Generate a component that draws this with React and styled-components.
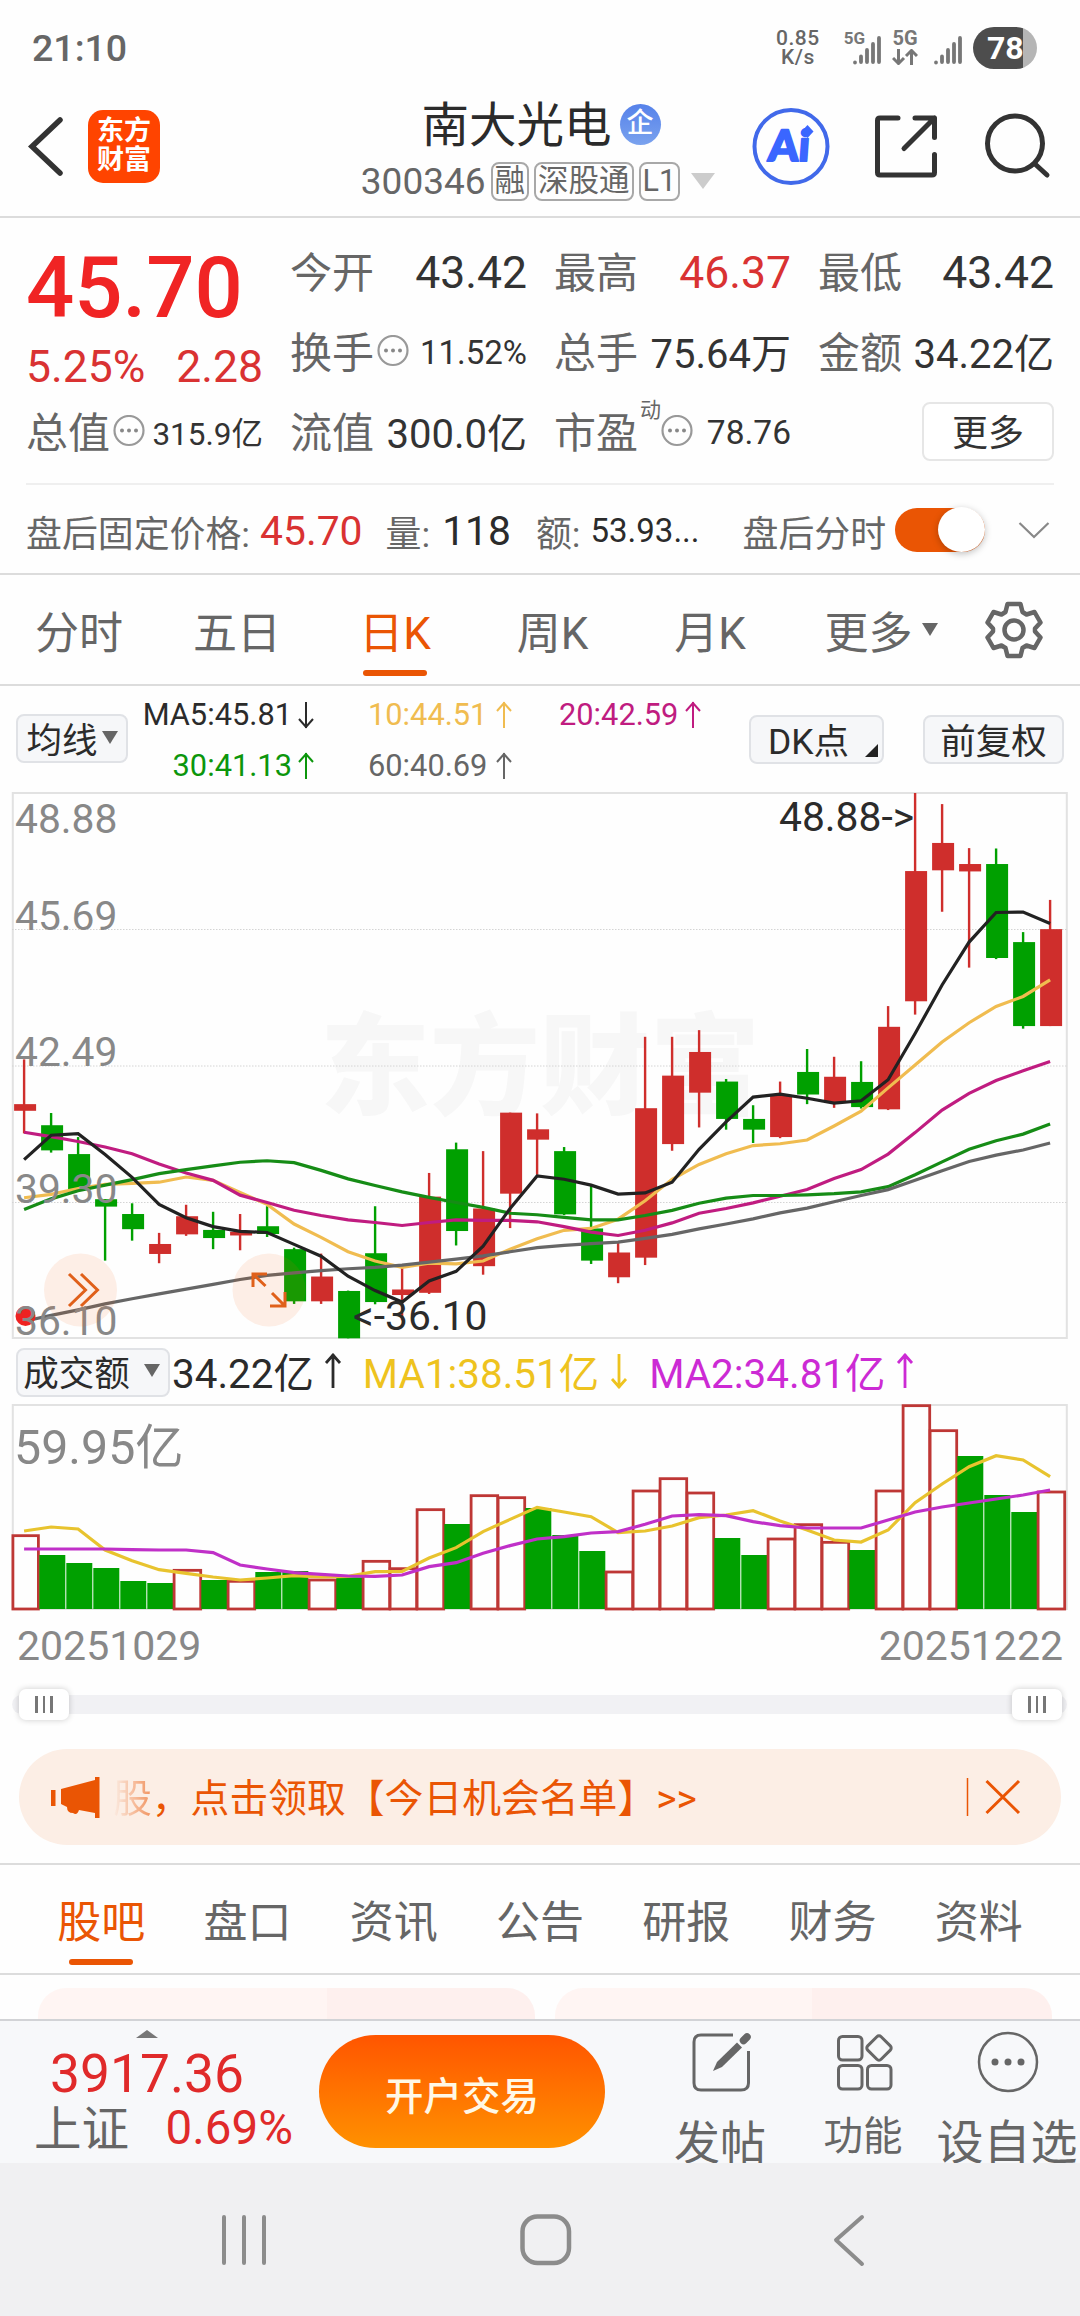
import React from 'react';
import styled, { createGlobalStyle } from 'styled-components';

const GlobalStyle = createGlobalStyle`
  * {
    box-sizing: border-box;
  }
  body {
    margin: 0;
    background: #fefefe;
    font-family: Roboto, 'Noto Sans CJK SC', sans-serif;
    color: #666;
    overflow: hidden;
  }
  svg {
    display: block;
    flex: none;
  }
`;

const red = '#d93232';
const orange = '#ea5504';
const dark = '#2b2b2b';

const Screen = styled.div`
  width: 1080px;
  height: 2316px;
  display: flex;
  flex-direction: column;
  overflow: hidden;
`;

/* ---------- status bar ---------- */

const StatusBar = styled.div`
  height: 75px;
  padding: 22px 43px 0 32px;
  display: flex;
  align-items: flex-start;
  justify-content: space-between;
`;

const Clock = styled.span`
  font-size: 37.5px;
  line-height: 53px;
  font-weight: 500;
  color: #666;
`;

const StatusRight = styled.div`
  display: flex;
  align-items: center;
  height: 52px;
`;

const NetSpeed = styled.div`
  display: flex;
  flex-direction: column;
  align-items: center;
  font-size: 21px;
  line-height: 19.5px;
  font-weight: 500;
  letter-spacing: 0.5px;
  margin-right: 24px;
`;

const Battery = styled.div`
  width: 64px;
  height: 42px;
  margin-left: 10px;
  border-radius: 21px;
  background: linear-gradient(90deg, #4d4d4d 50px, #b5b5b5 50px);
  color: #fff;
  font-size: 32px;
  line-height: 43px;
  font-weight: 700;
  padding-left: 14px;
`;

/* ---------- header ---------- */

const Header = styled.header`
  height: 143px;
  border-bottom: 2px solid #dcdcdc;
  display: flex;
  align-items: flex-start;
  padding: 0 29px 0 27px;
`;

const AppLogo = styled.div`
  width: 72px;
  height: 73px;
  margin: 35px 0 0 23px;
  border-radius: 15px;
  background: #ff4400;
  color: #fff;
  font-size: 27px;
  line-height: 29px;
  font-weight: 700;
  text-align: center;
  padding-top: 7px;
`;

const TitleBox = styled.div`
  width: 355px;
  margin: 16px 0 0 201px;
  display: flex;
  flex-direction: column;
  align-items: center;
`;

const StockName = styled.div`
  height: 60px;
  display: flex;
  align-items: center;
  gap: 8px;
  margin-left: 5px;
  font-size: 47.5px;
  color: ${dark};
`;

const CompanyBadge = styled.span`
  width: 41px;
  height: 41px;
  margin-top: 6px;
  border-radius: 50%;
  background: linear-gradient(#5682ea, #7aa2ee);
  color: #fff;
  font-size: 27px;
  line-height: 39px;
  font-weight: 500;
  text-align: center;
`;

const CodeRow = styled.div`
  display: flex;
  align-items: center;
  height: 48px;
  margin: 6px 0 0 -1px;
  gap: 5px;
  font-size: 37px;
  color: #666;
  white-space: nowrap;
`;

const Tag = styled.span`
  height: 39px;
  padding: 0 2px;
  border: 2px solid #a8a8a8;
  border-radius: 8px;
  font-size: 30.5px;
  line-height: 34px;
  flex: none;
`;

const HeaderIcons = styled.div`
  display: flex;
  margin: 33px 0 0 auto;
`;

/* ---------- quote ---------- */

const Quote = styled.section`
  height: 267px;
  margin: 0 26px;
  border-bottom: 2px solid #efefef;
  display: grid;
  column-gap: 27px;
  grid-template-columns: 237px 237px 237px 236px;
  grid-template-rows: 80px 80px 80px;
  padding-top: 14px;
`;

const PriceCell = styled.div`
  grid-row: span 2;
`;

const Price = styled.div`
  height: 111px;
  font-size: 85px;
  line-height: 112px;
  font-weight: 500;
  color: #f02424;
`;

const Change = styled.div`
  display: flex;
  justify-content: space-between;
  height: 48px;
  line-height: 49px;
  font-size: 44.5px;
  color: ${red};
`;

const Cell = styled.div`
  display: flex;
  align-items: center;
`;

const Label = styled.span`
  font-size: 42px;
  white-space: nowrap;
  margin: -5px 2px 0 0;
`;

const Value = styled.span`
  margin-left: auto;
  margin-top: ${(p) => p.$top || 0}px;
  font-size: ${(p) => p.$size || 44.5}px;
  color: ${(p) => p.$color || '#333'};
  white-space: nowrap;
`;

const Sup = styled.sup`
  align-self: flex-start;
  font-size: 21px;
  line-height: 26px;
  margin: 5px -1px 0 0;
`;

const MoreButton = styled.button`
  margin: -2px 0 0 auto;
  width: 132px;
  height: 59px;
  padding: 0 0 4px;
  border: 2px solid #e6e6e6;
  border-radius: 8px;
  background: #fff;
  font: inherit;
  font-size: 36px;
  color: #333;
`;

const AfterHours = styled.section`
  height: 90px;
  padding: 3px 30px 0 26px;
  border-bottom: 2px solid #dcdcdc;
  display: flex;
  align-items: center;
  font-size: 35.9px;
  white-space: nowrap;
`;

const AfterValue = styled.span`
  font-size: ${(p) => p.$size || 40.8}px;
  color: ${(p) => p.$color || dark};
  margin: 0 ${(p) => p.$gap}px 0 ${(p) => p.$before || 10}px;
`;

const Toggle = styled.span`
  width: 90px;
  height: 44px;
  margin: -2px 0 0 9px;
  border-radius: 22px;
  background: ${orange};
  display: flex;
  justify-content: flex-end;
  align-items: center;

  &::after {
    content: '';
    width: 47px;
    height: 45px;
    border-radius: 50%;
    background: #fff;
    box-shadow: 0 2px 7px rgba(0, 0, 0, 0.25);
  }
`;

/* ---------- tabs ---------- */

const Tabs = styled.nav`
  height: 111px;
  border-bottom: 2px solid #dcdcdc;
  display: flex;
  padding: 0 ${(p) => p.$inset || 0}px;
`;

const Tab = styled.div`
  width: ${(p) => p.$width}px;
  display: flex;
  align-items: center;
  justify-content: center;
  position: relative;
  font-size: 44px;
  color: ${(p) => (p.$active ? orange : '#666')};

  &::after {
    content: '';
    display: ${(p) => (p.$active ? 'block' : 'none')};
    position: absolute;
    left: calc(50% - 32px);
    bottom: 8px;
    width: 64px;
    height: 6px;
    border-radius: 3px;
    background: ${orange};
  }
`;

const Caret = styled.i`
  border: ${(p) => p.$w || 8}px solid transparent;
  border-top: ${(p) => p.$h || 13}px solid ${(p) => p.$color || '#666'};
  border-bottom: 0;
  margin-left: ${(p) => p.$gap || 0}px;
`;

/* ---------- indicators ---------- */

const MaBar = styled.div`
  height: 107px;
  display: flex;
  align-items: flex-start;
  padding: 0 16px;
`;

const Chip = styled.div`
  width: ${(p) => p.$width}px;
  height: 49px;
  margin: ${(p) => p.$margin || 0};
  padding: 0 ${(p) => p.$padRight || 0}px 3px 0;
  border: 2px solid #e0e2e6;
  border-radius: 8px;
  background: #f6f7f9;
  display: flex;
  align-items: center;
  justify-content: center;
  position: relative;
  flex: none;
  font-size: 35.5px;
  color: ${dark};
  white-space: nowrap;
`;

const Corner = styled.i`
  position: absolute;
  right: 4px;
  bottom: 5px;
  border-left: 13px solid transparent;
  border-bottom: 13px solid #222;
`;

const MaGrid = styled.div`
  display: grid;
  grid-template-columns: 175px 140px 166px;
  grid-template-rows: 51px 51px;
  column-gap: 51px;
  margin-left: 14px;
  padding-top: 3px;
  flex: none;
`;

const MaText = styled.div`
  display: flex;
  align-items: center;
  justify-content: ${(p) => (p.$left ? 'flex-start' : 'flex-end')};
  font-size: 30.8px;
  color: ${(p) => p.$color};
`;

const TurnoverBar = styled.div`
  height: 66px;
  display: flex;
  align-items: center;
  padding-left: 16px;
  font-size: 40.4px;
`;

const Turnover = styled.span`
  display: flex;
  align-items: center;
  color: ${(p) => p.$color};
  margin: -3px ${(p) => p.$gap || 0}px 0 2px;

  svg {
    margin-top: 1px;
  }
`;

const ChartSvg = styled.svg`
  margin-left: 12px;
  overflow: visible;
  font-size: 40.8px;
`;

const Dates = styled.div`
  height: 81px;
  padding: 11px 17px 0 17px;
  display: flex;
  justify-content: space-between;
  font-size: 41px;
  line-height: 51px;
  color: #888;
`;

const Range = styled.div`
  height: 19px;
  margin: 4px 13px 0 12px;
  border-radius: 10px;
  background: #f1f1f4;
  display: flex;
  align-items: center;
  justify-content: space-between;
  padding: 0 5px 0 7px;
`;

const Handle = styled.div`
  width: 50px;
  height: 31px;
  border-radius: 7px;
  background: #fff;
  box-shadow: 0 0 6px rgba(0, 0, 0, 0.2);
  display: flex;
  align-items: center;
  justify-content: center;
  gap: 5px;

  i {
    width: 2.5px;
    height: 17px;
    background: #777;
  }
`;

/* ---------- notice ---------- */

const Notice = styled.div`
  height: 96px;
  margin: 35px 19px 18px;
  border-radius: 48px;
  background: #fceee5;
  display: flex;
  align-items: center;
  padding: 0 40px 0 31px;
  font-size: 38.8px;
  color: ${orange};
  white-space: nowrap;
`;

const NoticeText = styled.span`
  margin: -4px 0 0 13px;
`;

const Faded = styled.span`
  background: linear-gradient(90deg, rgba(234, 85, 4, 0), rgba(234, 85, 4, 0.6));
  background-clip: text;
  color: transparent;
`;

const Cards = styled.div`
  height: 44px;
  padding: 13px 28px 0 38px;
  display: flex;
  justify-content: space-between;
  overflow: hidden;
`;

const Card = styled.div`
  width: 497px;
  height: 80px;
  border-radius: 28px;
  background: linear-gradient(90deg, #fff5f3 ${(p) => p.$split}px, #fef0ee ${(p) => p.$split}px);
`;

/* ---------- bottom ---------- */

const BottomBar = styled.footer`
  height: 144px;
  border-top: 2px solid #d2d3d6;
  background: #f7f8fa;
  display: flex;
  align-items: flex-start;
  flex: none;
`;

const IndexBox = styled.div`
  width: 293px;
  padding-left: 34px;
  display: flex;
  flex-direction: column;
  align-items: center;
  color: #e02a2a;

  svg {
    margin: 9px 34px 0 0;
  }
`;

const IndexValue = styled.div`
  font-size: 53.3px;
  line-height: 60px;
  margin: 6px 33px 0 0;
`;

const IndexRow = styled.div`
  display: flex;
  align-items: center;
  justify-content: space-between;
  width: 259px;
  height: 48px;
  font-size: 47.5px;
  white-space: nowrap;

  b {
    font-weight: 400;
    margin: -6px 0 0 0;
    color: #666;
  }
`;

const TradeButton = styled.button`
  width: 286px;
  height: 113px;
  margin: 14px 0 0 26px;
  padding: 3px 0 0;
  border: 0;
  border-radius: 57px;
  background: linear-gradient(#ff5500, #ff9100);
  font: inherit;
  font-size: 38.5px;
  font-weight: 500;
  color: #fff8e6;
`;

const Action = styled.div`
  width: ${(p) => p.$width}px;
  margin-left: ${(p) => p.$gap}px;
  padding-top: 9px;
  display: flex;
  flex-direction: column;
  align-items: center;
  flex: none;
  font-size: ${(p) => p.$size}px;
  line-height: 60px;
  white-space: nowrap;

  span {
    margin: ${(p) => p.$drop}px 2px 0 0;
  }
`;

const NavBar = styled.div`
  height: 153px;
  flex: none;
  background: #f0f0f2;
  display: flex;
  align-items: flex-start;
  padding: 50px 0 0 218px;
`;

/* ---------- chart data: [up, high, body top, body bottom, low] on the 35..1508 axis ---------- */

const candles = [
  [1, 755, 876, 894, 955], [0, 900, 933, 1001, 1007], [0, 965, 1011, 1107, 1107],
  [0, 1133, 1133, 1153, 1299], [0, 1144, 1173, 1214, 1245], [1, 1224, 1254, 1281, 1306],
  [1, 1148, 1179, 1228, 1232], [0, 1167, 1216, 1238, 1268], [1, 1173, 1221, 1231, 1271],
  [0, 1152, 1206, 1227, 1235], [0, 1264, 1268, 1409, 1416], [1, 1280, 1342, 1409, 1416],
  [0, 1380, 1381, 1509, 1509], [0, 1152, 1279, 1411, 1417], [1, 1308, 1377, 1392, 1460],
  [1, 1062, 1126, 1386, 1389], [0, 980, 998, 1219, 1258], [1, 1003, 1158, 1314, 1337],
  [1, 899, 899, 1118, 1211], [1, 901, 944, 972, 1067], [0, 992, 1003, 1174, 1176],
  [0, 1097, 1212, 1299, 1308], [1, 1246, 1277, 1344, 1360], [1, 694, 887, 1291, 1311],
  [1, 694, 799, 984, 1002], [1, 676, 735, 845, 939], [0, 808, 815, 916, 945],
  [0, 879, 916, 945, 981], [1, 815, 852, 965, 968], [0, 727, 789, 850, 876],
  [1, 748, 802, 873, 886], [0, 760, 816, 884, 888], [1, 611, 667, 890, 892],
  [1, 35, 246, 598, 634], [1, 65, 170, 244, 356], [1, 184, 227, 247, 507],
  [0, 185, 227, 481, 484], [0, 411, 438, 665, 672], [1, 324, 403, 665, 665],
];

const priceLines = [
  { color: '#f0bc50', points: [1129, 1120, 1104, 1093, 1090, 1087, 1073, 1082, 1115, 1147, 1200, 1236, 1275, 1300, 1317, 1306, 1308, 1300, 1268, 1240, 1217, 1212, 1187, 1137, 1079, 1039, 1010, 988, 983, 973, 935, 895, 832, 770, 708, 656, 612, 585, 540] },
  { color: '#c01c80', points: [952, 964, 977, 992, 1010, 1038, 1062, 1082, 1122, 1142, 1163, 1177, 1189, 1196, 1204, 1196, 1189, 1190, 1190, 1194, 1207, 1222, 1231, 1217, 1197, 1171, 1158, 1143, 1125, 1107, 1077, 1053, 1011, 953, 892, 847, 812, 786, 761] },
  { color: '#168c16', points: [1161, 1132, 1110, 1095, 1080, 1064, 1053, 1043, 1033, 1029, 1034, 1055, 1078, 1096, 1113, 1128, 1142, 1155, 1171, 1175, 1182, 1189, 1189, 1177, 1163, 1144, 1130, 1123, 1123, 1121, 1118, 1113, 1099, 1067, 1032, 998, 975, 957, 930] },
  { color: '#666', points: [1463, 1447, 1432, 1416, 1402, 1389, 1376, 1363, 1350, 1339, 1332, 1326, 1321, 1317, 1311, 1303, 1295, 1286, 1275, 1264, 1258, 1253, 1249, 1239, 1228, 1213, 1200, 1186, 1170, 1157, 1140, 1123, 1107, 1082, 1056, 1031, 1014, 1000, 981] },
  { color: '#222', points: [1026, 960, 956, 1012, 1074, 1147, 1183, 1207, 1220, 1223, 1255, 1287, 1341, 1380, 1411, 1354, 1328, 1260, 1158, 1070, 1079, 1095, 1119, 1116, 1087, 998, 924, 857, 849, 860, 873, 867, 810, 685, 554, 438, 358, 357, 388] },
];

const volumes = [
  [1, 587], [0, 645], [0, 669], [0, 684], [0, 723], [0, 729], [1, 691], [0, 720], [1, 724], [0, 696],
  [0, 693], [1, 720], [0, 712], [1, 664], [1, 686], [1, 509], [0, 552], [1, 467], [1, 473], [0, 504],
  [0, 585], [0, 633], [1, 696], [1, 453], [1, 416], [1, 459], [0, 594], [0, 645], [1, 597], [1, 554],
  [1, 607], [0, 630], [1, 453], [1, 197], [1, 272], [0, 348], [0, 465], [0, 516], [1, 456],
];

const volumeLines = [
  { color: '#e8c32e', points: [573, 561, 567, 630, 662, 689, 700, 711, 720, 714, 707, 711, 709, 695, 694, 654, 623, 575, 538, 502, 516, 530, 578, 573, 558, 533, 525, 512, 543, 570, 600, 606, 570, 488, 432, 380, 347, 360, 410] },
  { color: '#c030c8', points: [627, 627, 627, 627, 630, 630, 630, 638, 675, 687, 698, 703, 708, 709, 705, 680, 668, 640, 617, 597, 590, 579, 575, 553, 528, 524, 527, 545, 557, 564, 564, 564, 540, 516, 501, 489, 477, 465, 450] },
];
// the slow average stays flat for its first days
volumeLines[1].points.splice(4, 3, 629, 630, 630);

const axis = [
  ['48.88', 40],
  ['45.69', 137],
  ['42.49', 273],
  ['39.30', 409.5],
  ['36.10', 541.5],
];

const centerX = (i) => 12.1 + i * 27;
const priceY = (v) => (v - 35) / 2.703;
const volumeY = (v) => (v - 195) / 3;
const toPoints = (list, scale) => list.map((v, i) => `${centerX(i)},${scale(v)}`).join(' ');

const PriceChart = () => (
  <ChartSvg width="1056" height="546" viewBox="0 0 1056 546">
    <text x="308" y="313" fontSize="110" fontWeight="900" fill="#f7f7f7">
      东方财富
    </text>
    <rect x="0.8" y="0" width="1054" height="545" fill="none" stroke="#e2e2e2" strokeWidth="2" />
    {[136.5, 273, 409.5].map((y) => (
      <line key={y} x1="0" x2="1055" y1={y} y2={y} stroke="#d4d4d4" strokeDasharray="1.5 1.5" />
    ))}
    {candles.map(([up, high, top, bottom, low], i) => (
      <g key={i} fill={up ? '#cf2e2c' : '#00a000'}>
        <rect x={centerX(i) - 1.2} y={priceY(high)} width="2.4" height={priceY(low) - priceY(high)} />
        <rect x={centerX(i) - 10} y={priceY(top)} width="22" height={priceY(bottom) - priceY(top)} />
      </g>
    ))}
    {priceLines.map((line) => (
      <polyline
        key={line.color}
        points={toPoints(line.points, priceY)}
        fill="none"
        stroke={line.color}
        strokeWidth="3.2"
      />
    ))}
    <circle cx="13.5" cy="523" r="10" fill="#ee2222" />
    {axis.map(([text, y]) => (
      <text key={text} x="3" y={y} fill="#888">
        {text}
      </text>
    ))}
    <text x="767" y="38" fill={dark}>{'48.88->'}</text>
    <text x="341" y="537" fill={dark}>{'<-36.10'}</text>
    <circle cx="68.5" cy="497" r="36.5" fill="rgba(250,100,20,.1)" />
    <circle cx="257" cy="497" r="36.5" fill="rgba(250,100,20,.1)" />
    <g fill="none" stroke="#e0601a" strokeWidth="3">
      <path d="M57 481 L73.500 497 L57 513 M69 481 L85.500 497 L69 513" />
      <path d="M241 494 V481 H255 M241 481 L253.500 493 M273 499 V513 H258 M273 513 L260 500" />
    </g>
  </ChartSvg>
);

const VolumeChart = () => (
  <ChartSvg width="1056" height="205" viewBox="0 0 1056 205">
    <rect x="0.8" y="0" width="1054" height="204" fill="none" stroke="#e2e2e2" strokeWidth="2" />
    <text x="2" y="59" fontSize="48.3" fill="#888">
      59.95亿
    </text>
    {volumes.map(([up, top], i) =>
      up ? (
        <rect
          key={i}
          x={centerX(i) - 12 + (i ? 0 : 0.8)}
          y={volumeY(top)}
          width={i ? 26.6 : 25.5}
          height={204 - volumeY(top)}
          fill="#fefefe"
          stroke="#be3735"
          strokeWidth="2.8"
        />
      ) : (
        <rect key={i} x={centerX(i) - 11.8} y={volumeY(top)} width="26" height={204 - volumeY(top)} fill="#00a000" />
      ),
    )}
    {volumeLines.map((line) => (
      <polyline
        key={line.color}
        points={toPoints(line.points, volumeY)}
        fill="none"
        stroke={line.color}
        strokeWidth="3.2"
      />
    ))}
  </ChartSvg>
);

/* ---------- icons ---------- */

const Signal = () => (
  <svg width="30" height="30" viewBox="0 0 30 30" stroke="#777" strokeWidth="3.800" strokeLinecap="round">
    <path d="M3 27.500 V27.600 M9 21.500 V27 M15 15 V27 M21 9 V27 M27 3 V27" />
  </svg>
);

const Dots = () => (
  <svg width="34" height="34" viewBox="0 0 34 34">
    <circle cx="17" cy="15.500" r="14.500" fill="none" stroke="#999" strokeWidth="2.2" />
    <g fill="#888">
      <circle cx="10" cy="15.500" r="2" />
      <circle cx="17" cy="15.500" r="2" />
      <circle cx="24" cy="15.500" r="2" />
    </g>
  </svg>
);

const SignalGroup = styled.div`
  display: flex;
  align-items: ${(p) => (p.$stack ? 'center' : 'flex-start')};
  flex-direction: ${(p) => (p.$stack ? 'column' : 'row')};
  height: 36px;
  margin: ${(p) => (p.$stack ? '0 15px 0 10px' : 0)};
  font-size: ${(p) => (p.$stack ? 20 : 17)}px;
  line-height: 16px;
  font-weight: 700;
  color: #777;

  svg {
    margin-top: ${(p) => (p.$stack ? 3 : 5)}px;
    margin-left: ${(p) => (p.$stack ? 0 : p.$offset)}px;
  }
`;

const Arrow = ({ up, size = 22, height = 28, gap = 3 }) => (
  <svg width={size + gap} height={height} viewBox={`${-gap} 0 ${size + gap} ${height}`}>
    <path
      d={`M${size / 2} 1 V${height - 1} M${size / 2 - 7} ${up ? 10 : height - 10} L${size / 2} ${
        up ? 2 : height - 2
      } L${size / 2 + 7} ${up ? 10 : height - 10}`}
      fill="none"
      stroke="currentColor"
      strokeWidth={height > 30 ? 2.8 : 2}
    />
  </svg>
);

const BarsHandle = () => (
  <Handle>
    <i />
    <i />
    <i />
  </Handle>
);

const PushedSvg = styled.svg`
  margin-left: auto;
`;

const SectionTabs = styled(Tabs)`
  height: 112px;
  border-top: 2px solid #dcdcdc;
`;

const App = () => {
  const sections = ['股吧', '盘口', '资讯', '公告', '研报', '财务', '资料'];

  return (
    <Screen>
      <GlobalStyle />
      <StatusBar>
        <Clock>21:10</Clock>
        <StatusRight>
          <NetSpeed>
            <span>0.85</span>
            <span>K/s</span>
          </NetSpeed>
          <SignalGroup $offset={-13}>
            5G
            <Signal />
          </SignalGroup>
          <SignalGroup $stack>
            5G
            <svg width="26" height="16" viewBox="0 0 26 16" fill="none" stroke="#777" strokeWidth="3">
              <path d="M6.500 0 V14 M1 9 L6.500 14.500 L12 9 M19.500 16 V2 M14 7 L19.500 1.500 L25 7" />
            </svg>
          </SignalGroup>
          <SignalGroup $offset={0}>
            <Signal />
          </SignalGroup>
          <Battery>78</Battery>
        </StatusRight>
      </StatusBar>

      <Header>
        <svg width="38" height="143" viewBox="27 75 38 143">
          <path d="M60 120 L32 146.500 L60 173" fill="none" stroke="#333" strokeWidth="5.500" strokeLinecap="round" />
        </svg>
        <AppLogo>
          东方
          <br />
          财富
        </AppLogo>
        <TitleBox>
          <StockName>
            南大光电
            <CompanyBadge>企</CompanyBadge>
          </StockName>
          <CodeRow>
            300346
            <Tag>融</Tag>
            <Tag>深股通</Tag>
            <Tag>L1</Tag>
            <Caret $w={12} $h={16} $gap={6} $color="#ccc" />
          </CodeRow>
        </TitleBox>
        <HeaderIcons>
          <svg width="300" height="78" viewBox="751 107 300 78" fill="none" strokeLinecap="round" strokeLinejoin="round">
            <circle cx="791" cy="145.500" r="36.500" stroke="#4169ea" strokeWidth="4" />
            <g transform="translate(767.5 159.5) skewX(-4)">
              <text
                fontFamily="Lato, sans-serif"
                fontSize="43"
                fontWeight="900"
                fill="#3a66ff"
                stroke="#3a66ff"
                strokeWidth="2"
              >
                Ai
              </text>
            </g>
            <path d="M807.500 124 L813.500 130.500 L807.500 137 L801.500 130.500 Z" fill="#3a66ff" />
            <g stroke="#333" strokeWidth="5">
              <path d="M898 117 H880 Q877.500 117 877.500 119.500 V171.500 Q877.500 174 880 174 H932 Q934.500 174 934.500 171.500 V153.500" />
              <path d="M915 117 H934.500 V136.500 M934.500 117 L904 147.500" />
              <circle cx="1015" cy="142.500" r="27.500" />
              <path d="M1035 163 L1047 174" />
            </g>
          </svg>
        </HeaderIcons>
      </Header>

      <Quote>
        <PriceCell>
          <Price>45.70</Price>
          <Change>
            <span>5.25%</span>
            <span>2.28</span>
          </Change>
        </PriceCell>
        <Cell>
          <Label>今开</Label>
          <Value $top={2}>43.42</Value>
        </Cell>
        <Cell>
          <Label>最高</Label>
          <Value $top={2} $color={red}>46.37</Value>
        </Cell>
        <Cell>
          <Label>最低</Label>
          <Value $top={2}>43.42</Value>
        </Cell>
        <Cell>
          <Label>换手</Label>
          <Dots />
          <Value $size={33}>11.52%</Value>
        </Cell>
        <Cell>
          <Label>总手</Label>
          <Value $size={40} $top={-3}>75.64万</Value>
        </Cell>
        <Cell>
          <Label>金额</Label>
          <Value $size={40} $top={-3}>34.22亿</Value>
        </Cell>
        <Cell>
          <Label>总值</Label>
          <Dots />
          <Value $size={31.5} $top={-3}>315.9亿</Value>
        </Cell>
        <Cell>
          <Label>流值</Label>
          <Value $size={40} $top={-3}>300.0亿</Value>
        </Cell>
        <Cell>
          <Label>市盈</Label>
          <Sup>动</Sup>
          <Dots />
          <Value $size={33.5}>78.76</Value>
        </Cell>
        <Cell>
          <MoreButton>更多</MoreButton>
        </Cell>
      </Quote>

      <AfterHours>
        盘后固定价格:
        <AfterValue $color={red} $gap={23}>45.70</AfterValue>
        量:
        <AfterValue $gap={25} $before={12}>118</AfterValue>
        额:
        <AfterValue $size={33} $gap={43}>53.93...</AfterValue>
        盘后分时
        <Toggle />
        <PushedSvg width="32" height="18" viewBox="0 0 32 18">
          <path d="M1.500 1 L16 15 L30.500 1" fill="none" stroke="#888" strokeWidth="2.200" />
        </PushedSvg>
      </AfterHours>

      <Tabs>
        <Tab $width={158}>分时</Tab>
        <Tab $width={158}>五日</Tab>
        <Tab $width={158} $active>日K</Tab>
        <Tab $width={157}>周K</Tab>
        <Tab $width={158}>月K</Tab>
        <Tab $width={184}>
          更多
          <Caret $gap={9} />
        </Tab>
        <Tab $width={82}>
          <svg width="60" height="60" viewBox="-30 -30 60 60" fill="none" stroke="#666" strokeWidth="4.500" strokeLinejoin="round">
            <path d="M-6.500 -26 H6.500 L8.500 -18 L12.500 -15.500 L20.500 -18 L26.500 -7.500 L21 -1.500 V1.500 L26.500 7.500 L20.500 18 L12.500 15.500 L8.500 18 L6.500 26 H-6.500 L-8.500 18 L-12.500 15.500 L-20.500 18 L-26.500 7.500 L-21 1.500 V-1.500 L-26.500 -7.500 L-20.500 -18 L-12.500 -15.500 L-8.500 -18 Z" />
            <circle r="9.500" />
          </svg>
        </Tab>
      </Tabs>

      <MaBar>
        <Chip $width={112} $margin="28px 0 0">
          均线
          <Caret $gap={4} />
        </Chip>
        <MaGrid>
          <MaText $color={dark}>MA5:45.81<Arrow /></MaText>
          <MaText $color="#f0bc50" $left>10:44.51<Arrow up gap={6} /></MaText>
          <MaText $color="#c01c80" $left>20:42.59<Arrow up gap={4} /></MaText>
          <MaText $color="#0c960c">30:41.13<Arrow up /></MaText>
          <MaText $color="#666" $left>60:40.69<Arrow up gap={6} /></MaText>
        </MaGrid>
        <Chip $width={135} $margin="29px 0 0 auto" $padRight={16}>
          DK点
          <Corner />
        </Chip>
        <Chip $width={141} $margin="29px 0 0 39px">前复权</Chip>
      </MaBar>

      <PriceChart />

      <TurnoverBar>
        <Chip $width={154} $padRight={3}>
          成交额
          <Caret $gap={14} />
        </Chip>
        <Turnover $color={dark} $gap={17}>34.22亿<Arrow up height={36} gap={8} /></Turnover>
        <Turnover $color="#eec31e" $gap={17}>MA1:38.51亿<Arrow height={36} gap={9} /></Turnover>
        <Turnover $color="#cc2ad4">MA2:34.81亿<Arrow up height={36} gap={9} /></Turnover>
      </TurnoverBar>

      <VolumeChart />

      <Dates>
        <span>20251029</span>
        <span>20251222</span>
      </Dates>

      <Range>
        <BarsHandle />
        <BarsHandle />
      </Range>

      <Notice>
        <svg width="50" height="42" viewBox="50 1775 50 42" fill={orange}>
          <path d="M51 1789 H55.500 V1805 H51 Z M61 1788 L95 1779 V1776 H99.500 V1817 H95 V1812 L79 1809 Q77 1815 73 1812 Q67 1812 67 1806 L61 1803 Z" />
        </svg>
        <NoticeText>
          <Faded>股</Faded>，点击领取【今日机会名单】{'>>'}
        </NoticeText>
        <PushedSvg width="56" height="42" viewBox="966 1776 56 42" fill="none" stroke={orange}>
          <path d="M968.500 1778 V1816" strokeWidth="1.500" />
          <path d="M987.500 1781 L1020 1813 M1020 1781 L987.500 1813" strokeWidth="3" />
        </PushedSvg>
      </Notice>

      <SectionTabs $inset={28}>
        {sections.map((name, i) => (
          <Tab key={name} $width={146.3} $active={i === 0}>
            {name}
          </Tab>
        ))}
      </SectionTabs>

      <Cards>
        <Card $split={289} />
        <Card $split={257} />
      </Cards>

      <BottomBar>
        <IndexBox>
          <svg width="22" height="8" viewBox="0 0 22 8">
            <path d="M0 8 L11 0 L22 8 Z" fill="#777" />
          </svg>
          <IndexValue>3917.36</IndexValue>
          <IndexRow>
            <b>上证</b>
            0.69%
          </IndexRow>
        </IndexBox>
        <TradeButton>开户交易</TradeButton>
        <Action $width={100} $gap={66} $size={46} $drop={19}>
          <svg width="64" height="64" viewBox="689 2029 64 64" fill="none" stroke="#666" strokeWidth="3">
            <path d="M733 2034 H701 Q694 2034 694 2041 V2082 Q694 2089 701 2089 H741 Q748.500 2089 748.500 2082 V2050" />
            <path d="M713 2070 L717 2061 L737 2041.500 L742 2046.500 L722 2066 Z" fill="#666" stroke="none" />
            <path d="M743.500 2039.500 L747 2036" strokeWidth="7.500" strokeLinecap="round" />
          </svg>
          <span>发帖</span>
        </Action>
        <Action $width={100} $gap={43} $size={39.5} $drop={13}>
          <svg width="64" height="64" viewBox="832 2029 64 64" fill="none" stroke="#666" strokeWidth="3">
            <rect x="838.5" y="2035.5" width="23.5" height="23.500" rx="4" />
            <rect x="838.5" y="2064.500" width="23.500" height="23.500" rx="4" />
            <rect x="867.5" y="2064.500" width="23.500" height="23.500" rx="4" />
            <rect x="869.5" y="2037.500" width="19" height="19" rx="3" transform="rotate(45 879 2047)" />
          </svg>
          <span>功能</span>
        </Action>
        <Action $width={142} $gap={23} $size={47} $drop={19}>
          <svg width="64" height="64" viewBox="-32 -32 64 64">
            <circle r="29" fill="none" stroke="#666" strokeWidth="2.500" />
            <g fill="#666">
              <circle cx="-13" r="3.500" />
              <circle r="3.500" />
              <circle cx="13" r="3.500" />
            </g>
          </svg>
          <span>设自选</span>
        </Action>
      </BottomBar>

      <NavBar>
        <svg width="660" height="56" viewBox="218 2213 660 56" fill="none" stroke="#8c8c8c" strokeLinecap="round" strokeLinejoin="round">
          <path d="M224 2217 V2263 M244 2217 V2263 M264 2217 V2263" strokeWidth="4" />
          <rect x="522.500" y="2216.500" width="46.500" height="46.500" rx="15" strokeWidth="4.500" />
          <path d="M862 2217 L836 2240 L862 2264" strokeWidth="4" />
        </svg>
      </NavBar>
    </Screen>
  );
};

export default App;
